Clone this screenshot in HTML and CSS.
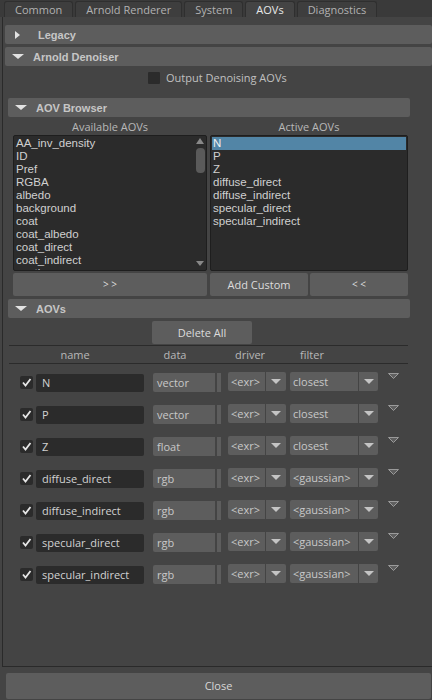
FILE: index.html
```html
<!DOCTYPE html>
<html lang="en">
<head>
  <meta charset="UTF-8">
  <title>Render Settings - AOVs</title>
  <link rel="stylesheet" href="styles.css">
</head>
<body>
  <div class="tabs">
    <div class="tab">Common</div>
    <div class="tab">Arnold Renderer</div>
    <div class="tab">System</div>
    <div class="tab active">AOVs</div>
    <div class="tab">Diagnostics</div>
  </div>

  <div class="panel">
    <div class="frame-head closed"><span class="tri-right"></span>Legacy</div>
    <div class="frame-head denoiser"><span class="tri-down"></span>Arnold Denoiser</div>
    <div class="denoise-row"><span class="box"></span>Output Denoising AOVs</div>

    <div class="sub">
      <div class="frame-head"><span class="tri-down"></span>AOV Browser</div>
      <div class="browser">
        <div class="col-label">Available AOVs</div>
        <div class="col-label">Active AOVs</div>

        <div class="list">
          <div class="items">
            <div class="item">AA_inv_density</div>
            <div class="item">ID</div>
            <div class="item">Pref</div>
            <div class="item">RGBA</div>
            <div class="item">albedo</div>
            <div class="item">background</div>
            <div class="item">coat</div>
            <div class="item">coat_albedo</div>
            <div class="item">coat_direct</div>
            <div class="item">coat_indirect</div>
            <div class="item">cputime</div>
          </div>
          <div class="scrollbar">
            <span class="sb-up"></span>
            <span class="sb-thumb"></span>
            <span class="sb-down"></span>
          </div>
        </div>

        <div class="list">
          <div class="items">
            <div class="item selected">N</div>
            <div class="item">P</div>
            <div class="item">Z</div>
            <div class="item">diffuse_direct</div>
            <div class="item">diffuse_indirect</div>
            <div class="item">specular_direct</div>
            <div class="item">specular_indirect</div>
          </div>
        </div>

        <div class="btn move">&gt; &gt;</div>
        <div class="btn-pair">
          <div class="btn">Add Custom</div>
          <div class="btn move">&lt; &lt;</div>
        </div>
      </div>

      <div class="frame-head aovs-head"><span class="tri-down"></span>AOVs</div>
      <div class="btn delete-all">Delete All</div>
      <div class="rule"></div>
      <div class="col-heads">
        <span class="h-name">name</span>
        <span class="h-data">data</span>
        <span class="h-driver">driver</span>
        <span class="h-filter">filter</span>
      </div>
      <div class="rule"></div>

      <div class="rows" id="rows"></div>
    </div>
  </div>

  <div class="footer">
    <div class="btn close">Close</div>
  </div>

  <script>
    const aovs = [
      { name: 'N', data: 'vector', filter: 'closest' },
      { name: 'P', data: 'vector', filter: 'closest' },
      { name: 'Z', data: 'float', filter: 'closest' },
      { name: 'diffuse_direct', data: 'rgb', filter: '<gaussian>' },
      { name: 'diffuse_indirect', data: 'rgb', filter: '<gaussian>' },
      { name: 'specular_direct', data: 'rgb', filter: '<gaussian>' },
      { name: 'specular_indirect', data: 'rgb', filter: '<gaussian>' }
    ];

    const arrow = '<svg width="10" height="5"><polygon points="0,0 10,0 5,5" fill="#c4c4c4"/></svg>';

    function renderRows() {
      const rows = document.getElementById('rows');
      aovs.forEach(aov => {
        const row = document.createElement('div');
        row.className = 'aov-row';
        row.innerHTML = `
          <span class="check"><svg width="13" height="13"><polyline points="3,6.5 5.5,9.5 10.5,3" fill="none" stroke="#e6e6e6" stroke-width="1.8"/></svg></span>
          <span class="name"></span>
          <span class="data"><span class="val">${aov.data}</span><span class="strip"></span></span>
          <span class="dd driver"><span class="txt">&lt;exr&gt;</span><span class="dd-arrow">${arrow}</span></span>
          <span class="dd filter"><span class="txt"></span><span class="dd-arrow">${arrow}</span></span>
          <span class="opt"><svg width="11" height="6"><polygon points="0.5,0.5 10.5,0.5 5.5,5.5" fill="#5f5f5f" stroke="#9a9a9a"/></svg></span>
        `;
        row.querySelector('.name').textContent = aov.name;
        row.querySelector('.filter .txt').textContent = aov.filter;
        rows.appendChild(row);
      });
    }

    renderRows();
  </script>
</body>
</html>
```

FILE: styles.css
```css
body {
  margin: 0;
  width: 432px;
  height: 700px;
  overflow: hidden;
  background: #444;
  color: #c8c8c8;
  font-family: "Open Sans", "Liberation Sans", Arial, sans-serif;
  font-size: 11px;
}

/* tab strip */
.tabs {
  display: flex;
  gap: 2px;
  height: 17px;
  padding: 1px 0 0 4px;
  box-sizing: border-box;
  background: #3a3a3a;
}

.tab {
  padding: 0 10px;
  line-height: 15px;
  background: #3e3e3e;
  border: 1px solid #2f2f2f;
  border-bottom: none;
  border-radius: 3px 3px 0 0;
  color: #b2b2b2;
}

.tab.active {
  background: #444;
  color: #e8e8e8;
}

.panel {
  height: 650px;
  margin-left: 2px;
  padding-top: 8px;
  box-sizing: border-box;
  border-left: 1px solid #2a2a2a;
  border-bottom: 1px solid #2a2a2a;
  overflow: hidden;
}

/* collapsible frame headers */
.frame-head {
  display: flex;
  align-items: center;
  height: 19px;
  margin-left: 2px;
  padding-left: 7px;
  background: #5d5d5d;
  border-radius: 2px;
  color: #c6c6c6;
  font-family: "Liberation Sans", Arial, sans-serif;
  font-weight: bold;
}

.frame-head.closed {
  padding-left: 10px;
}

.denoiser {
  margin-top: 3px;
}

.tri-down {
  width: 0;
  height: 0;
  margin-right: 9px;
  border-left: 6px solid transparent;
  border-right: 6px solid transparent;
  border-top: 5px solid #e2e2e2;
}

.tri-right {
  width: 0;
  height: 0;
  margin-right: 18px;
  border-top: 4.5px solid transparent;
  border-bottom: 4.5px solid transparent;
  border-left: 5px solid #e2e2e2;
}

.denoise-row {
  display: flex;
  align-items: center;
  gap: 6px;
  padding: 5px 0 14px 145px;
  line-height: 13px;
  color: #c0c0c0;
}

.box {
  width: 12px;
  height: 12px;
  background: #2b2b2b;
  border-radius: 1px;
}

.sub {
  width: 402px;
  margin-left: 5px;
}

.sub .frame-head {
  margin-left: 0;
}

/* AOV browser */
.browser {
  display: grid;
  grid-template-columns: 194px 198px;
  column-gap: 3px;
  padding: 0 2px 0 5px;
}

.col-label {
  height: 18px;
  line-height: 19px;
  text-align: center;
  color: #b8b8b8;
}

.list {
  display: flex;
  height: 136px;
  background: #2b2b2b;
  border: 1px solid #1e1e1e;
  border-radius: 2px;
  box-sizing: border-box;
  overflow: hidden;
}

.items {
  flex: 1;
  padding: 1px 1px 0;
}

.item {
  height: 13px;
  padding-left: 1px;
  line-height: 13px;
  font-family: "Liberation Sans", Arial, sans-serif;
  font-size: 11.5px;
  color: #d0d0d0;
  white-space: nowrap;
}

.item.selected {
  background: #5285a6;
  color: #f0f0f0;
}

.scrollbar {
  display: flex;
  flex-direction: column;
  align-items: center;
  width: 12px;
  padding: 2px 0 4px;
  box-sizing: border-box;
}

.sb-up {
  border-left: 4.5px solid transparent;
  border-right: 4.5px solid transparent;
  border-bottom: 6px solid #888;
}

.sb-thumb {
  width: 9px;
  height: 25px;
  margin-top: 4px;
  background: #5a5a5a;
  border-radius: 4px;
}

.sb-down {
  margin-top: auto;
  border-left: 4.5px solid transparent;
  border-right: 4.5px solid transparent;
  border-top: 5px solid #888;
}

.btn {
  height: 23px;
  line-height: 23px;
  background: #5d5d5d;
  border-radius: 2px;
  text-align: center;
  color: #dcdcdc;
}

.browser > .btn,
.btn-pair {
  margin-top: 2px;
}

.btn-pair {
  display: grid;
  grid-template-columns: 1fr 1fr;
  gap: 2px;
}

.btn.move {
  font-size: 10px;
}

/* AOV list */
.aovs-head {
  margin-top: 3px;
}

.delete-all {
  width: 100px;
  margin: 3px 0 0 144px;
}

.rule {
  height: 1px;
  margin: 1px 2px 0 1px;
  background: #2b2b2b;
}

.col-heads {
  display: flex;
  height: 16px;
  line-height: 17px;
  padding-left: 12px;
  color: #b8b8b8;
}

.col-heads span {
  text-align: center;
}

.h-name { width: 110px; }
.h-data { width: 90px; }
.h-driver { width: 60px; }
.h-filter { width: 64px; }

.rows {
  display: flex;
  flex-direction: column;
  gap: 13px;
  padding-top: 8px;
}

.aov-row {
  display: flex;
  align-items: flex-start;
  height: 19px;
  padding-left: 12px;
}

.check {
  display: flex;
  width: 13px;
  height: 13px;
  margin-top: 4px;
  background: #2b2b2b;
  border-radius: 2px;
}

.name {
  width: 108px;
  height: 18px;
  margin: 2px 0 0 3px;
  padding-left: 6px;
  box-sizing: border-box;
  line-height: 18px;
  background: #2b2b2b;
  border-radius: 2px;
  color: #d2d2d2;
}

.data {
  display: flex;
  gap: 2px;
  height: 19px;
  margin: 1px 0 0 9px;
}

.data .val {
  width: 62px;
  padding-left: 4px;
  box-sizing: border-box;
  line-height: 19px;
  background: #5d5d5d;
  border-radius: 2px 0 0 2px;
}

.data .strip {
  width: 4px;
  background: #5d5d5d;
}

.dd {
  display: flex;
  gap: 1px;
  height: 19px;
}

.dd .txt {
  padding-left: 4px;
  box-sizing: border-box;
  line-height: 19px;
  background: #5d5d5d;
  border-radius: 2px 0 0 2px;
  white-space: nowrap;
  overflow: hidden;
}

.dd-arrow {
  display: flex;
  align-items: center;
  justify-content: center;
  background: #5d5d5d;
  border-radius: 0 2px 2px 0;
}

.driver {
  margin-left: 7px;
}

.driver .txt { width: 37px; padding-left: 3px; }
.driver .dd-arrow { width: 20px; }

.filter {
  margin-left: 4px;
}

.filter .txt {
  width: 68px;
  padding-left: 3px;
}

.filter .dd-arrow { width: 19px; }

.opt {
  display: flex;
  margin: 1px 0 0 10px;
}

.footer {
  padding: 6px 1px 0 6px;
}

.btn.close {
  height: 26px;
  line-height: 26px;
  color: #d8d8d8;
}
```
